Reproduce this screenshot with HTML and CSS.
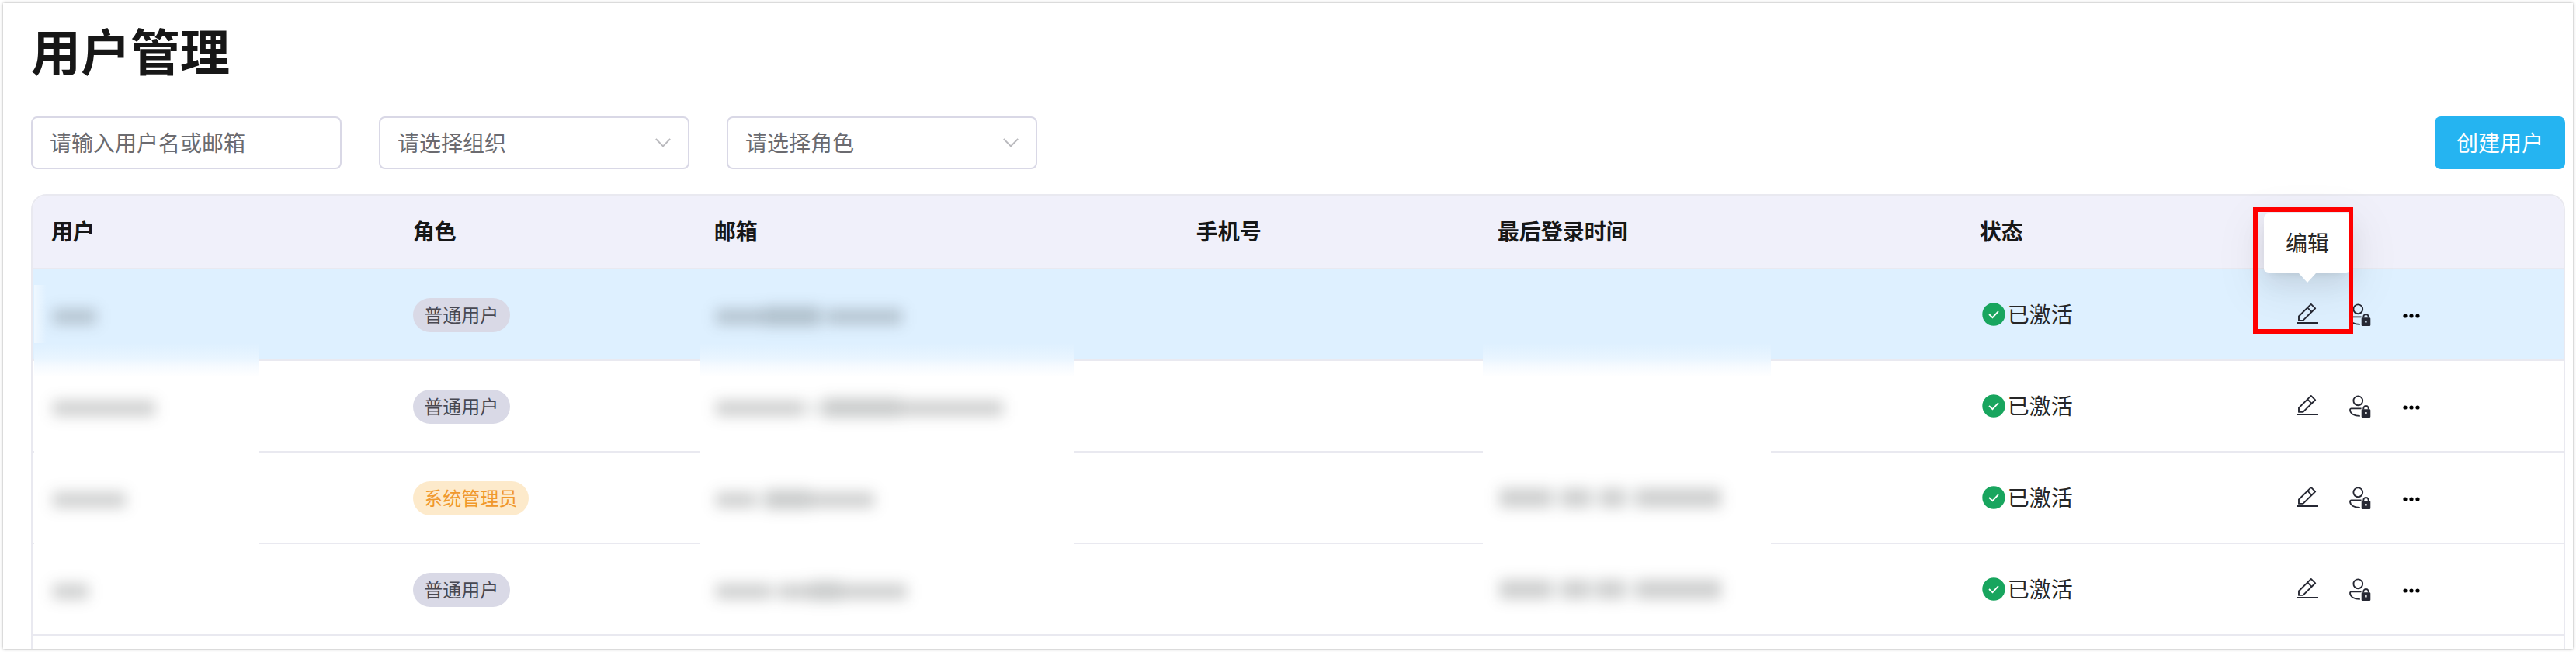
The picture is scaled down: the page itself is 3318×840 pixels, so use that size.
FILE: index.html
```html
<!DOCTYPE html>
<html lang="zh-CN">
<head>
<meta charset="utf-8">
<title>用户管理</title>
<link rel="stylesheet" href="styles.css">
</head>
<body>
<svg class="sprite" aria-hidden="true">
  <symbol id="i-edit" viewBox="0 0 32 32">
    <path d="M3 17.5 18.8 1.9 24.2 7.3 8.4 22.9H3z M14.2 6.4 19.6 11.8" fill="none" stroke="currentColor" stroke-width="1.9" stroke-linejoin="round"/>
    <path d="M0 25h28v2H0z" fill="currentColor"/>
  </symbol>
  <symbol id="i-lock" viewBox="0 0 32 32">
    <circle cx="11.3" cy="8.3" r="5.9" fill="none" stroke="currentColor" stroke-width="1.9"/>
    <path d="M15.6 18.4H2.6c-1 0-1.6.6-1.6 1.6 0 4.6 4.800 7.900 12.400 7.900h.4" fill="none" stroke="currentColor" stroke-width="1.8"/>
    <path d="M18.300 19.500v-1.300a3.200 3.200 0 0 1 6.400 0v1.300" fill="none" stroke="currentColor" stroke-width="1.900"/>
    <path fill-rule="evenodd" d="M17 19.200h9a1.300 1.300 0 0 1 1.300 1.300v8.200a1.300 1.300 0 0 1-1.300 1.300h-9a1.300 1.300 0 0 1-1.300-1.300v-8.200a1.300 1.300 0 0 1 1.300-1.300zM20.200 22.900v2.600h2.400v-2.600z" fill="currentColor"/>
  </symbol>
  <symbol id="i-more" viewBox="0 0 32 32">
    <circle cx="8" cy="17" r="2.600"/><circle cx="16" cy="17" r="2.600"/><circle cx="24" cy="17" r="2.600"/>
  </symbol>
  <symbol id="i-ok" viewBox="0 0 30 30">
    <circle cx="15" cy="15" r="14.700" fill="#18a55e"/>
    <path d="M9 15l4.500 4.200L21 11.200" fill="none" stroke="#fff" stroke-width="1.800"/>
  </symbol>
  <symbol id="i-down" viewBox="0 0 20 12">
    <path d="M.8 1 10 10.400 19.200 1" fill="none" stroke="#b9b9bd" stroke-width="1.900"/>
  </symbol>
</svg>

<main class="card">
  <h1 class="title">用户管理</h1>
  <div class="toolbar">
    <div class="field"><span>请输入用户名或邮箱</span></div>
    <div class="field"><span>请选择组织</span><svg class="chev"><use href="#i-down"/></svg></div>
    <div class="field"><span>请选择角色</span><svg class="chev"><use href="#i-down"/></svg></div>
    <button class="create">创建用户</button>
  </div>

  <section class="table">
    <div class="row head">
      <div>用户</div><div>角色</div><div>邮箱</div><div>手机号</div><div>最后登录时间</div><div>状态</div><div></div>
    </div>
    <div class="row active">
      <div><i class="smudge"><b style="width:56px"></b></i></div>
      <div><span class="tag">普通用户</span></div>
      <div><i class="smudge"><b style="width:62px"></b><b class="tall" style="width:72px"></b><b class="pale" style="width:10px"></b><b style="width:96px"></b></i></div>
      <div></div><div></div>
      <div><svg class="ok"><use href="#i-ok"/></svg><span class="state">已激活</span></div>
      <div class="acts"><span class="edit"><svg class="icon"><use href="#i-edit"/></svg><span class="tip">编辑</span><span class="frame"></span></span><svg class="icon"><use href="#i-lock"/></svg><svg class="icon"><use href="#i-more"/></svg></div>
    </div>
    <div class="row">
      <div><i class="smudge"><b style="width:132px"></b></i></div>
      <div><span class="tag">普通用户</span></div>
      <div><i class="smudge"><b style="width:112px"></b><b class="pale" style="width:26px"></b><b class="tall" style="width:100px"></b><b style="width:132px"></b></i></div>
      <div></div><div></div>
      <div><svg class="ok"><use href="#i-ok"/></svg><span class="state">已激活</span></div>
      <div class="acts"><svg class="icon"><use href="#i-edit"/></svg><svg class="icon"><use href="#i-lock"/></svg><svg class="icon"><use href="#i-more"/></svg></div>
    </div>
    <div class="row">
      <div><i class="smudge"><b style="width:94px"></b></i></div>
      <div><span class="tag admin">系统管理员</span></div>
      <div><i class="smudge"><b style="width:50px"></b><b class="pale" style="width:14px"></b><b class="tall" style="width:58px"></b><b style="width:82px"></b></i></div>
      <div></div>
      <div><i class="smudge date"><b style="width:66px"></b><b class="pale" style="width:16px"></b><b style="width:34px"></b><b class="pale" style="width:16px"></b><b style="width:28px"></b><b class="pale" style="width:18px"></b><b style="width:108px"></b></i></div>
      <div><svg class="ok"><use href="#i-ok"/></svg><span class="state">已激活</span></div>
      <div class="acts"><svg class="icon"><use href="#i-edit"/></svg><svg class="icon"><use href="#i-lock"/></svg><svg class="icon"><use href="#i-more"/></svg></div>
    </div>
    <div class="row">
      <div><i class="smudge"><b style="width:46px"></b></i></div>
      <div><span class="tag">普通用户</span></div>
      <div><i class="smudge"><b style="width:70px"></b><b class="pale" style="width:12px"></b><b style="width:40px"></b><b class="tall" style="width:40px"></b><b style="width:84px"></b></i></div>
      <div></div>
      <div><i class="smudge date"><b style="width:66px"></b><b class="pale" style="width:16px"></b><b style="width:34px"></b><b class="pale" style="width:10px"></b><b style="width:34px"></b><b class="pale" style="width:18px"></b><b style="width:108px"></b></i></div>
      <div><svg class="ok"><use href="#i-ok"/></svg><span class="state">已激活</span></div>
      <div class="acts"><svg class="icon"><use href="#i-edit"/></svg><svg class="icon"><use href="#i-lock"/></svg><svg class="icon"><use href="#i-more"/></svg></div>
    </div>
    <span class="veil veil-user"></span>
    <span class="veil veil-mail"></span>
    <span class="veil veil-time"></span>
  </section>
</main>
</body>
</html>
```
FILE: styles.css
```css
* { box-sizing: border-box; }

body {
  margin: 0;
  padding: 4px;
  background: #fff;
  color: #262626;
  font: 28px/40px "Noto Sans CJK SC", sans-serif;
}

.sprite { display: none; }

.card {
  height: 832px;
  padding: 0 10px 0 36px;
  overflow: hidden;
  display: flex;
  flex-direction: column;
  background: #fff;
  box-shadow: 0 0 4px rgba(0, 0, 0, .35);
}

.title {
  margin: 11px 0 39px;
  color: #171717;
  font-size: 64px;
  line-height: 96px;
  font-weight: 700;
}

.toolbar {
  display: flex;
  gap: 48px;
  margin-bottom: 32px;
}

.field {
  width: 400px;
  height: 68px;
  padding: 0 22px;
  display: flex;
  align-items: center;
  justify-content: space-between;
  border: 2px solid #d9d8e6;
  border-radius: 8px;
  color: #6b6b70;
}

.field span { padding-bottom: 2px; }

.chev { width: 20px; height: 12px; }

.create {
  width: 168px;
  height: 68px;
  margin-left: auto;
  padding: 0 0 2px;
  border: 0;
  border-radius: 8px;
  background: #25b4f1;
  color: #fff;
  font: inherit;
}

.table {
  position: relative;
  flex: 1 0 640px;
  border: 2px solid #e9e9f0;
  border-radius: 20px;
}

.row {
  height: 118px;
  display: grid;
  grid-template-columns: 6fr 5fr 8fr 5fr 8fr 5fr 5fr;
  border-bottom: 2px solid #e9e9f0;
}

.row > div {
  min-width: 0;
  padding-left: 24px;
  display: flex;
  align-items: center;
}

.head {
  height: 95px;
  border-radius: 18px 18px 0 0;
  background: #f0f0fa;
  color: #171717;
  font-weight: 700;
}

.head > div { padding-bottom: 4px; }

.active { background: #def0ff; }

.tag {
  height: 44px;
  margin-top: 2px;
  padding: 0 14.5px;
  border-radius: 22px;
  background: #d9d9e6;
  color: #484852;
  font-size: 24px;
  line-height: 42px;
}

.admin { background: #fdeacb; color: #f0982c; }

.ok { width: 30px; height: 30px; margin: 0 3px 0 3px; }

.state { padding-bottom: 2px; }

.row > .acts {
  padding: 2px 0 0 44px;
  gap: 36px;
}

.icon {
  display: block;
  flex: none;
  width: 32px;
  height: 32px;
  color: #262833;
}

.acts .icon:last-child { margin-left: -4px; }

.edit { position: relative; }

.tip {
  position: absolute;
  z-index: 4;
  left: -42px;
  top: -115px;
  width: 112px;
  height: 77px;
  border-radius: 6px;
  background: #fff;
  text-align: center;
  line-height: 74px;
  box-shadow: 0 6px 12px -8px rgba(0, 0, 0, .12), 0 12px 32px rgba(0, 0, 0, .08), 0 18px 56px 16px rgba(0, 0, 0, .05);
}

.tip::after {
  content: "";
  position: absolute;
  left: 45px;
  top: 77px;
  border: solid transparent;
  border-width: 12px 11px 0;
  border-top-color: #fff;
}

.frame {
  position: absolute;
  z-index: 5;
  left: -56px;
  top: -123px;
  width: 129px;
  height: 163px;
  border: 6px solid #f00;
}

.acts .edit .icon { margin-left: 0; }

/* Redacted values: soft bars above a veil that hides the row rules. */
.smudge {
  position: relative;
  z-index: 2;
  margin: 5px 0 0 2px;
  display: flex;
  align-items: center;
  filter: blur(9px);
}

.smudge b { height: 20px; background: rgba(30, 38, 36, .22); }
.smudge .tall { height: 25px; background: rgba(30, 38, 36, .24); }
.smudge .pale { background: rgba(30, 38, 36, .08); }
.smudge.date { margin-top: 0; }
.smudge.date b { height: 25px; }

.veil {
  position: absolute;
  z-index: 1;
  top: 190px;
  height: 346px;
  background: linear-gradient(#def0ff00, #e9f5ff 20px, #f5faff 29px, #fff 44px);
}

.veil-user { left: 2px; width: 289px; }
.veil-mail { left: 860px; width: 482px; }
.veil-time { left: 1868px; width: 371px; }

.veil-user::before {
  content: "";
  position: absolute;
  left: 0;
  bottom: 100%;
  width: 16px;
  height: 75px;
  background: linear-gradient(90deg, rgba(255, 255, 255, .5), transparent);
}
```
